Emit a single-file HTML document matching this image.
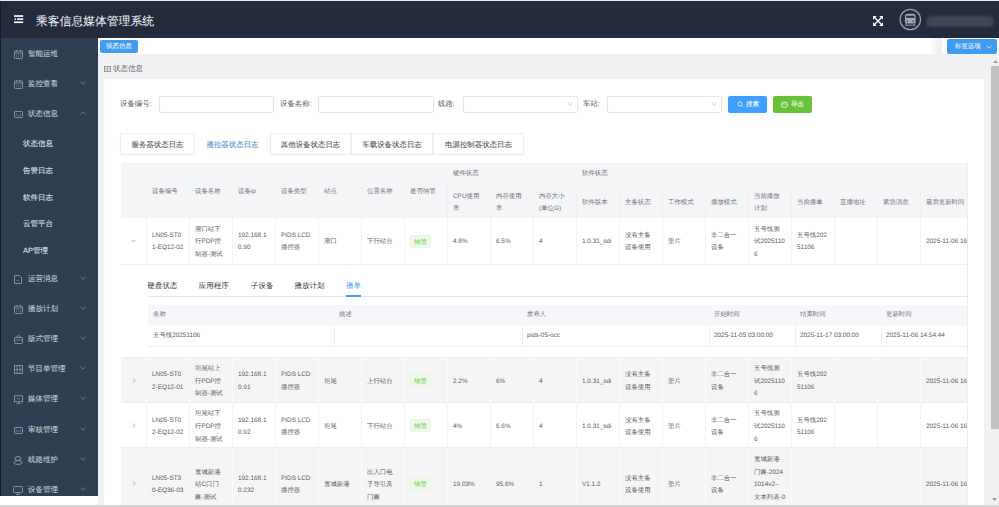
<!DOCTYPE html>
<html><head><meta charset="utf-8">
<style>
*{box-sizing:border-box;margin:0;padding:0}
html,body{width:999px;height:507px;overflow:hidden;background:#fff;font-family:"Liberation Sans",sans-serif;text-rendering:geometricPrecision}
.mi .tx{-webkit-text-stroke:0.08px}
.tag1,.tagopt,.btn span{-webkit-text-stroke:0.05px}
.si .tx2{-webkit-text-stroke:0.05px}
#hdr .title{-webkit-text-stroke:0.05px}
.tab{-webkit-text-stroke:0.05px}
.abs{position:absolute}
#hdr{left:0;top:0;width:999px;height:38px;background:#232b3d;border-top:1px solid #e8eaee}
#hdr .ham{left:14px;top:15px;width:9px;height:8px}
#hdr .title{left:36px;top:12.5px;font-size:11.8px;color:#f0f2f5;line-height:14px;white-space:nowrap}
#side{left:0;top:38px;width:98px;height:458px;background:#2f3f53;border-left:1px solid #1a222d}
.mi{position:absolute;left:0;width:97px;height:0;font-size:7.5px;color:#c3ccd7;white-space:nowrap}
.mi .tx{position:absolute;left:28px;top:-5px;line-height:10px}
.si{position:absolute;left:23px;height:0;font-size:7.5px;color:#e8edf3;white-space:nowrap}
.si .tx2{position:absolute;left:0;top:-5px;line-height:10px}
#main{left:98px;top:38px;width:901px;height:469px;background:#f0f1f3}
#tabbar{left:98px;top:38px;width:901px;height:16px;background:#fff}
.tag1{left:100px;top:40px;width:38px;height:13px;background:#3f9cf2;border-radius:2px;color:#fff;font-size:6.4px;line-height:13px;text-align:center}
.tagopt{left:946.5px;top:39px;width:50.5px;height:15px;background:#3f9cf2;border-radius:2px;color:#e8f2ff;font-size:6.4px;line-height:15px;padding-left:8.5px}
#sb{left:990px;top:54px;width:9px;height:451px;background:#f1f1f1}
#sb .th{left:1px;top:12px;width:8px;height:363px;background:#c1c1c1}
#card{left:103.5px;top:79px;width:880.5px;height:426px;background:#fff}
.crumb{left:104px;top:64px;font-size:7.5px;color:#606266;line-height:10px}
.lbl{font-size:7.4px;color:#5a5e66;line-height:10px;white-space:nowrap}
.inp{height:17px;border:1px solid #e5e6e9;border-radius:2px;background:#fff}
.btn{height:17px;border-radius:2px;color:#fff;font-size:6.5px;line-height:17px;text-align:center}
.tab{top:133px;height:22px;border:1px solid #eceef2;box-shadow:0 1px 2px rgba(0,0,0,0.03);font-size:7.45px;line-height:20px;padding-top:1px;text-align:center;color:#4a4d52;background:#fff;white-space:nowrap}
.tab.act{border-color:transparent;box-shadow:none;color:#4f88cf}

#tbl{position:absolute;left:121px;top:163px;width:847px;height:342px;overflow:hidden}
#tbl .tb{position:absolute}
#tbl .ct{position:absolute;font-size:6.4px;line-height:12.6px;color:#5a5d63;white-space:nowrap}
#tbl .ht{position:absolute;font-size:6.4px;line-height:12.6px;color:#6e7178;white-space:nowrap}
#tbl .tag{position:absolute;width:21px;height:13px;background:#eef8e8;border:1px solid #e8f5e0;border-radius:2px;color:#67c23a;font-size:6.4px;line-height:13px;text-align:center}
#tbl .it{position:absolute;font-size:7.5px;line-height:10px;color:#303133;white-space:nowrap}
#tbl .it.act{color:#409eff}
</style></head><body>
<div id="hdr" class="abs">
  <svg class="abs" style="left:14px;top:14px" width="9.5" height="9" viewBox="0 0 9.5 9"><rect x="0" y="0.2" width="9.2" height="1.7" fill="#fff"/><rect x="3" y="3.3" width="6.2" height="1.6" fill="#fff"/><path d="M0 4.1L2 2.9V5.3z" fill="#fff"/><rect x="0" y="6.4" width="9.2" height="1.7" fill="#fff"/></svg>
  <div class="abs title">乘客信息媒体管理系统</div>
  <svg class="abs" style="left:873px;top:15px" width="10" height="10" viewBox="0 0 10 10"><path d="M1.5 1.5L8.5 8.5M8.5 1.5L1.5 8.5" stroke="#fff" stroke-width="1.4"/><g fill="#fff"><path d="M0 0h3.8L0 3.8z"/><path d="M10 0h-3.8L10 3.8z"/><path d="M0 10h3.8L0 6.2z"/><path d="M10 10h-3.8L10 6.2z"/></g></svg>
  <svg class="abs" style="left:899px;top:7px" width="23" height="23" viewBox="0 0 23 23"><circle cx="11.3" cy="11.5" r="10.2" fill="none" stroke="#9a9fa8" stroke-width="1.2"/><path d="M6 8.2Q6 5.7 8.5 5.7H14.1Q16.6 5.7 16.6 8.2V14.6Q16.6 15.6 15.6 15.6H7Q6 15.6 6 14.6z" fill="#a3a7ae"/><rect x="7.1" y="7.7" width="8.4" height="2.2" fill="#2a3244"/><circle cx="8.3" cy="13.2" r="0.7" fill="#2a3244"/><circle cx="14.3" cy="13.2" r="0.7" fill="#2a3244"/><path d="M7.6 15.6L6.4 18.2M15 15.6L16.2 18.2M7.2 17.2H15.4" stroke="#a3a7ae" stroke-width="0.9" fill="none"/></svg>
  <div class="abs" style="left:926px;top:15px;width:68px;height:11px;border-radius:6px;background:#3d4757;filter:blur(0.8px)"></div>

</div>
<div id="side" class="abs"></div>
<div class="mi" style="top:54.0px"><svg class="abs" style="left:14px;top:-4px" width="9" height="9" viewBox="0 0 9 9"><rect x="0.5" y="1" width="8" height="7.5" rx="0.8" fill="none" stroke="#8b97a8" stroke-width="0.9"/><line x1="0.5" y1="3" x2="8.5" y2="3" stroke="#8b97a8" stroke-width="0.8"/><line x1="2.5" y1="0" x2="2.5" y2="1.8" stroke="#8b97a8" stroke-width="0.8"/><line x1="6.5" y1="0" x2="6.5" y2="1.8" stroke="#8b97a8" stroke-width="0.8"/><path d="M2 5h1M4 5h1M6 5h1M2 6.7h1M4 6.7h1M6 6.7h1" stroke="#8b97a8" stroke-width="0.6"/></svg><span class="tx">智能运维</span></div>
<div class="mi" style="top:84.0px"><svg class="abs" style="left:14px;top:-4px" width="9" height="9" viewBox="0 0 9 9"><rect x="0.5" y="1" width="8" height="7.5" rx="0.8" fill="none" stroke="#8b97a8" stroke-width="0.9"/><line x1="0.5" y1="3" x2="8.5" y2="3" stroke="#8b97a8" stroke-width="0.8"/><line x1="2.5" y1="0" x2="2.5" y2="1.8" stroke="#8b97a8" stroke-width="0.8"/><line x1="6.5" y1="0" x2="6.5" y2="1.8" stroke="#8b97a8" stroke-width="0.8"/><path d="M2 5h1M4 5h1M6 5h1M2 6.7h1M4 6.7h1M6 6.7h1" stroke="#8b97a8" stroke-width="0.6"/></svg><span class="tx">监控查看</span><svg class="abs" style="left:80px;top:-3px" width="6" height="4" viewBox="0 0 6 4"><path d="M0.5 0.8L3 3.2L5.5 0.8" fill="none" stroke="#7d8a9c" stroke-width="0.8"/></svg></div>
<div class="mi" style="top:114.0px"><svg class="abs" style="left:14px;top:-3px" width="9" height="7" viewBox="0 0 9 7"><rect x="0.5" y="0.5" width="8" height="6" rx="0.6" fill="none" stroke="#8b97a8" stroke-width="0.9"/><path d="M2.3 2.5v2M6.5 2.5v2M3.5 4.5h2" stroke="#8b97a8" stroke-width="0.6"/></svg><span class="tx">状态信息</span><svg class="abs" style="left:80px;top:-3px" width="6" height="4" viewBox="0 0 6 4"><path d="M0.5 3.2L3 0.8L5.5 3.2" fill="none" stroke="#7d8a9c" stroke-width="0.8"/></svg></div>
<div class="si" style="top:143.5px"><span class="tx2">状态信息</span></div>
<div class="si" style="top:170.5px"><span class="tx2">告警日志</span></div>
<div class="si" style="top:197.5px"><span class="tx2">软件日志</span></div>
<div class="si" style="top:224.0px"><span class="tx2">云管平台</span></div>
<div class="si" style="top:251.0px"><span class="tx2">AP管理</span></div>
<div class="mi" style="top:279.3px"><svg class="abs" style="left:14px;top:-4px" width="8" height="9" viewBox="0 0 8 9"><path d="M0.5 0.5h5l2 2v6h-7z" fill="none" stroke="#8b97a8" stroke-width="0.9"/><path d="M2.5 5.5h2" stroke="#8b97a8" stroke-width="0.7"/></svg><span class="tx">运营消息</span><svg class="abs" style="left:80px;top:-3px" width="6" height="4" viewBox="0 0 6 4"><path d="M0.5 0.8L3 3.2L5.5 0.8" fill="none" stroke="#7d8a9c" stroke-width="0.8"/></svg></div>
<div class="mi" style="top:309.3px"><svg class="abs" style="left:14px;top:-4px" width="9" height="9" viewBox="0 0 9 9"><rect x="0.5" y="1" width="8" height="7.5" rx="0.8" fill="none" stroke="#8b97a8" stroke-width="0.9"/><line x1="0.5" y1="3" x2="8.5" y2="3" stroke="#8b97a8" stroke-width="0.8"/><line x1="2.5" y1="0" x2="2.5" y2="1.8" stroke="#8b97a8" stroke-width="0.8"/><line x1="6.5" y1="0" x2="6.5" y2="1.8" stroke="#8b97a8" stroke-width="0.8"/><path d="M2 5h1M4 5h1M6 5h1M2 6.7h1M4 6.7h1M6 6.7h1" stroke="#8b97a8" stroke-width="0.6"/></svg><span class="tx">播放计划</span><svg class="abs" style="left:80px;top:-3px" width="6" height="4" viewBox="0 0 6 4"><path d="M0.5 0.8L3 3.2L5.5 0.8" fill="none" stroke="#7d8a9c" stroke-width="0.8"/></svg></div>
<div class="mi" style="top:339.3px"><svg class="abs" style="left:14px;top:-4px" width="9" height="9" viewBox="0 0 9 9"><rect x="0.5" y="2.5" width="8" height="6" rx="0.6" fill="none" stroke="#8b97a8" stroke-width="0.9"/><path d="M3 2.5v-1.6h3v1.6M0.5 5h8" fill="none" stroke="#8b97a8" stroke-width="0.7"/></svg><span class="tx">版式管理</span><svg class="abs" style="left:80px;top:-3px" width="6" height="4" viewBox="0 0 6 4"><path d="M0.5 0.8L3 3.2L5.5 0.8" fill="none" stroke="#7d8a9c" stroke-width="0.8"/></svg></div>
<div class="mi" style="top:369.3px"><svg class="abs" style="left:14px;top:-4px" width="9" height="9" viewBox="0 0 9 9"><rect x="0.5" y="0.5" width="8" height="8" fill="none" stroke="#8b97a8" stroke-width="0.9"/><path d="M3 0.5v8M6 0.5v8M0.5 4.5h8" stroke="#8b97a8" stroke-width="0.7"/></svg><span class="tx">节目单管理</span><svg class="abs" style="left:80px;top:-3px" width="6" height="4" viewBox="0 0 6 4"><path d="M0.5 0.8L3 3.2L5.5 0.8" fill="none" stroke="#7d8a9c" stroke-width="0.8"/></svg></div>
<div class="mi" style="top:399.3px"><svg class="abs" style="left:14px;top:-4px" width="9" height="9" viewBox="0 0 9 9"><rect x="0.5" y="0.8" width="8" height="6" fill="none" stroke="#8b97a8" stroke-width="0.9"/><path d="M4.5 6.8v2M2.5 8.5h4M3 3l1.5 1.5L6 3" fill="none" stroke="#8b97a8" stroke-width="0.7"/></svg><span class="tx">媒体管理</span><svg class="abs" style="left:80px;top:-3px" width="6" height="4" viewBox="0 0 6 4"><path d="M0.5 0.8L3 3.2L5.5 0.8" fill="none" stroke="#7d8a9c" stroke-width="0.8"/></svg></div>
<div class="mi" style="top:429.8px"><svg class="abs" style="left:14px;top:-3px" width="9" height="7" viewBox="0 0 9 7"><rect x="0.5" y="0.5" width="8" height="6" rx="0.6" fill="none" stroke="#8b97a8" stroke-width="0.9"/><path d="M2.3 2.5v2M6.5 2.5v2M3.5 4.5h2" stroke="#8b97a8" stroke-width="0.6"/></svg><span class="tx">审核管理</span><svg class="abs" style="left:80px;top:-3px" width="6" height="4" viewBox="0 0 6 4"><path d="M0.5 0.8L3 3.2L5.5 0.8" fill="none" stroke="#7d8a9c" stroke-width="0.8"/></svg></div>
<div class="mi" style="top:459.8px"><svg class="abs" style="left:13px;top:-4px" width="10" height="9" viewBox="0 0 10 9"><ellipse cx="5" cy="2.5" rx="3" ry="2" fill="none" stroke="#8b97a8" stroke-width="0.9"/><ellipse cx="5" cy="6.5" rx="4" ry="2" fill="none" stroke="#8b97a8" stroke-width="0.9"/></svg><span class="tx">线路维护</span><svg class="abs" style="left:80px;top:-3px" width="6" height="4" viewBox="0 0 6 4"><path d="M0.5 0.8L3 3.2L5.5 0.8" fill="none" stroke="#7d8a9c" stroke-width="0.8"/></svg></div>
<div class="mi" style="top:489.8px"><svg class="abs" style="left:13px;top:-4px" width="10" height="9" viewBox="0 0 10 9"><rect x="0.5" y="0.5" width="9" height="6" rx="0.8" fill="none" stroke="#8b97a8" stroke-width="0.9"/><path d="M3 8.5h4M5 6.5v2" stroke="#8b97a8" stroke-width="0.8"/></svg><span class="tx">设备管理</span><svg class="abs" style="left:80px;top:-3px" width="6" height="4" viewBox="0 0 6 4"><path d="M0.5 0.8L3 3.2L5.5 0.8" fill="none" stroke="#7d8a9c" stroke-width="0.8"/></svg></div>
<div id="main" class="abs"></div>
<div class="abs" style="left:0;top:1px;width:1px;height:495px;background:#1c1d20"></div>
<div id="tabbar" class="abs"></div>
<div class="abs tag1">状态信息</div>
<div class="abs" style="left:929px;top:38px;width:14px;height:16px;background:linear-gradient(to right,rgba(0,0,0,0),rgba(0,0,0,0.07) 85%,rgba(0,0,0,0))"></div>
<div class="abs tagopt">标签选项<svg class="abs" style="left:39px;top:5.5px" width="6" height="4" viewBox="0 0 6 4"><path d="M0.5 0.8L3 3.2L5.5 0.8" fill="none" stroke="#e8f2ff" stroke-width="0.8"/></svg></div>
<div id="sb" class="abs"><div class="abs th"></div>
<svg class="abs" style="left:3px;top:6px" width="5" height="3" viewBox="0 0 5 3"><path d="M0 3L2.5 0L5 3z" fill="#a0a0a0"/></svg>
<svg class="abs" style="left:2px;top:444px" width="5" height="3" viewBox="0 0 5 3"><path d="M0 0L2.5 3L5 0z" fill="#a0a0a0"/></svg></div>
<svg class="abs" style="left:104px;top:66px" width="7" height="6" viewBox="0 0 7 6"><rect x="0.4" y="0.4" width="6.2" height="5.2" fill="none" stroke="#8a8a8a" stroke-width="0.8"/><path d="M3.5 0.4v5.2M0.4 3h6.2" stroke="#8a8a8a" stroke-width="0.7"/></svg>
<div class="abs crumb" style="left:113px;top:64px">状态信息</div>
<div id="card" class="abs"></div>
<div class="abs" style="left:0;top:505px;width:999px;height:2px;background:#d6d6d6"></div>
<div class="abs lbl" style="left:120px;top:99px">设备编号:</div>
<div class="abs inp" style="left:159px;top:96px;width:115px"></div>
<div class="abs lbl" style="left:280px;top:99px">设备名称:</div>
<div class="abs inp" style="left:318px;top:96px;width:116px"></div>
<div class="abs lbl" style="left:438px;top:99px">线路:</div>
<div class="abs inp" style="left:463px;top:96px;width:115px"><svg class="abs" style="left:102.5px;top:5.3px" width="6" height="4" viewBox="0 0 6 4"><path d="M0.5 0.8L3 3.2L5.5 0.8" fill="none" stroke="#c0c4cc" stroke-width="0.8"/></svg></div>
<div class="abs lbl" style="left:583px;top:99px">车站:</div>
<div class="abs inp" style="left:607px;top:96px;width:115px"><svg class="abs" style="left:102.5px;top:5.3px" width="6" height="4" viewBox="0 0 6 4"><path d="M0.5 0.8L3 3.2L5.5 0.8" fill="none" stroke="#c0c4cc" stroke-width="0.8"/></svg></div>
<div class="abs btn" style="left:728px;top:96px;width:39px;background:#409eff"><svg class="abs" style="left:8.5px;top:5.2px" width="7" height="7" viewBox="0 0 7 7"><circle cx="3" cy="3" r="2.1" fill="none" stroke="#fff" stroke-width="0.75"/><path d="M4.5 4.5L5.8 5.8" stroke="#fff" stroke-width="0.75"/></svg><span style="position:absolute;left:18px;top:0">搜索</span></div>
<div class="abs btn" style="left:773px;top:96px;width:39px;background:#67c23a"><svg class="abs" style="left:8px;top:5px" width="7" height="7" viewBox="0 0 7 7"><rect x="0.6" y="1.3" width="5.8" height="4.8" rx="1.3" fill="none" stroke="#fff" stroke-width="0.75"/><path d="M0.6 3h5.8" stroke="#fff" stroke-width="0.6"/></svg><span style="position:absolute;left:18px;top:0">导出</span></div>
<div id="tbl">
<div class="tb" style="left:0;top:0;width:847px;height:55px;background:#f3f5f7"></div>
<div class="tb" style="left:326px;top:22px;width:1px;height:33px;background:#eef1f4"></div>
<div class="tb" style="left:369px;top:22px;width:1px;height:33px;background:#eef1f4"></div>
<div class="tb" style="left:412px;top:22px;width:1px;height:33px;background:#eef1f4"></div>
<div class="tb" style="left:455px;top:22px;width:1px;height:33px;background:#eef1f4"></div>
<div class="tb" style="left:498px;top:22px;width:1px;height:33px;background:#eef1f4"></div>
<div class="tb" style="left:541px;top:22px;width:1px;height:33px;background:#eef1f4"></div>
<div class="tb" style="left:584px;top:22px;width:1px;height:33px;background:#eef1f4"></div>
<div class="tb" style="left:627px;top:22px;width:1px;height:33px;background:#eef1f4"></div>
<div class="tb" style="left:670px;top:22px;width:1px;height:33px;background:#eef1f4"></div>
<div class="tb" style="left:713px;top:22px;width:1px;height:33px;background:#eef1f4"></div>
<div class="tb" style="left:756px;top:22px;width:1px;height:33px;background:#eef1f4"></div>
<div class="tb" style="left:799px;top:22px;width:1px;height:33px;background:#eef1f4"></div>
<div class="tb" style="left:325px;top:22px;width:522px;height:1px;background:#f0f2f4"></div>
<div class="ht" style="left:31px;top:22.70px">设备编号</div>
<div class="ht" style="left:74px;top:22.70px">设备名称</div>
<div class="ht" style="left:117px;top:22.70px">设备ip</div>
<div class="ht" style="left:160px;top:22.70px">设备类型</div>
<div class="ht" style="left:203px;top:22.70px">站点</div>
<div class="ht" style="left:246px;top:22.70px">位置名称</div>
<div class="ht" style="left:289px;top:22.70px">是否纳管</div>
<div class="ht" style="left:332px;top:5.20px">硬件状态</div>
<div class="ht" style="left:461px;top:5.20px">软件状态</div>
<div class="ht" style="left:332px;top:27.90px">CPU使用<br>率</div>
<div class="ht" style="left:375px;top:27.90px">内存使用<br>率</div>
<div class="ht" style="left:418px;top:27.90px">内存大小<br>(单位G)</div>
<div class="ht" style="left:461px;top:34.20px">软件版本</div>
<div class="ht" style="left:504px;top:34.20px">主备状态</div>
<div class="ht" style="left:547px;top:34.20px">工作模式</div>
<div class="ht" style="left:590px;top:34.20px">播放模式</div>
<div class="ht" style="left:633px;top:27.90px">当前播放<br>计划</div>
<div class="ht" style="left:676px;top:34.20px">当前播单</div>
<div class="ht" style="left:719px;top:34.20px">直播地址</div>
<div class="ht" style="left:762px;top:34.20px">紧急消息</div>
<div class="ht" style="left:805px;top:34.20px">最后更新时间</div>
<div class="tb" style="left:0;top:55px;width:847px;height:46.5px;background:#ffffff;border-bottom:1px solid #ebeef5"></div>
<div class="tb" style="left:25px;top:55px;width:1px;height:46.5px;background:#f1f3f5"></div>
<div class="tb" style="left:68px;top:55px;width:1px;height:46.5px;background:#f1f3f5"></div>
<div class="tb" style="left:111px;top:55px;width:1px;height:46.5px;background:#f1f3f5"></div>
<div class="tb" style="left:154px;top:55px;width:1px;height:46.5px;background:#f1f3f5"></div>
<div class="tb" style="left:197px;top:55px;width:1px;height:46.5px;background:#f1f3f5"></div>
<div class="tb" style="left:240px;top:55px;width:1px;height:46.5px;background:#f1f3f5"></div>
<div class="tb" style="left:283px;top:55px;width:1px;height:46.5px;background:#f1f3f5"></div>
<div class="tb" style="left:326px;top:55px;width:1px;height:46.5px;background:#f1f3f5"></div>
<div class="tb" style="left:369px;top:55px;width:1px;height:46.5px;background:#f1f3f5"></div>
<div class="tb" style="left:412px;top:55px;width:1px;height:46.5px;background:#f1f3f5"></div>
<div class="tb" style="left:455px;top:55px;width:1px;height:46.5px;background:#f1f3f5"></div>
<div class="tb" style="left:498px;top:55px;width:1px;height:46.5px;background:#f1f3f5"></div>
<div class="tb" style="left:541px;top:55px;width:1px;height:46.5px;background:#f1f3f5"></div>
<div class="tb" style="left:584px;top:55px;width:1px;height:46.5px;background:#f1f3f5"></div>
<div class="tb" style="left:627px;top:55px;width:1px;height:46.5px;background:#f1f3f5"></div>
<div class="tb" style="left:670px;top:55px;width:1px;height:46.5px;background:#f1f3f5"></div>
<div class="tb" style="left:713px;top:55px;width:1px;height:46.5px;background:#f1f3f5"></div>
<div class="tb" style="left:756px;top:55px;width:1px;height:46.5px;background:#f1f3f5"></div>
<div class="tb" style="left:799px;top:55px;width:1px;height:46.5px;background:#f1f3f5"></div>
<svg class="tb" style="left:10px;top:76.2px" width="5" height="4" viewBox="0 0 5 4"><path d="M0.5 1L2.5 3L4.5 1" fill="none" stroke="#909399" stroke-width="0.7"/></svg>
<div class="ct" style="left:31px;top:66.85px">LN05-ST0<br>1-EQ12-02</div>
<div class="ct" style="left:74px;top:60.55px">潮口站下<br>行PDP控<br>制器-测试</div>
<div class="ct" style="left:117px;top:66.85px">192.168.1<br>0.90</div>
<div class="ct" style="left:160px;top:66.85px">PIDS LCD<br>播控器</div>
<div class="ct" style="left:203px;top:73.15px">潮口</div>
<div class="ct" style="left:246px;top:73.15px">下行站台</div>
<div class="tag" style="left:289px;top:71.8px">纳管</div>
<div class="ct" style="left:332px;top:73.15px">4.8%</div>
<div class="ct" style="left:375px;top:73.15px">6.5%</div>
<div class="ct" style="left:418px;top:73.15px">4</div>
<div class="ct" style="left:461px;top:73.15px">1.0.31_sdi</div>
<div class="ct" style="left:504px;top:66.85px">没有主备<br>设备使用</div>
<div class="ct" style="left:547px;top:73.15px">垫片</div>
<div class="ct" style="left:590px;top:66.85px">非二合一<br>设备</div>
<div class="ct" style="left:633px;top:60.55px">五号线测<br>试2025110<br>6</div>
<div class="ct" style="left:676px;top:66.85px">五号线202<br>51106</div>
<div class="ct" style="left:805px;top:73.15px">2025-11-06 16:28:51</div>
<div class="tb" style="left:0;top:194.5px;width:847px;height:45px;background:#f5f5f6;border-bottom:1px solid #ebeef5"></div>
<div class="tb" style="left:25px;top:194.5px;width:1px;height:45px;background:#fbfbfc"></div>
<div class="tb" style="left:68px;top:194.5px;width:1px;height:45px;background:#fbfbfc"></div>
<div class="tb" style="left:111px;top:194.5px;width:1px;height:45px;background:#fbfbfc"></div>
<div class="tb" style="left:154px;top:194.5px;width:1px;height:45px;background:#fbfbfc"></div>
<div class="tb" style="left:197px;top:194.5px;width:1px;height:45px;background:#fbfbfc"></div>
<div class="tb" style="left:240px;top:194.5px;width:1px;height:45px;background:#fbfbfc"></div>
<div class="tb" style="left:283px;top:194.5px;width:1px;height:45px;background:#fbfbfc"></div>
<div class="tb" style="left:326px;top:194.5px;width:1px;height:45px;background:#fbfbfc"></div>
<div class="tb" style="left:369px;top:194.5px;width:1px;height:45px;background:#fbfbfc"></div>
<div class="tb" style="left:412px;top:194.5px;width:1px;height:45px;background:#fbfbfc"></div>
<div class="tb" style="left:455px;top:194.5px;width:1px;height:45px;background:#fbfbfc"></div>
<div class="tb" style="left:498px;top:194.5px;width:1px;height:45px;background:#fbfbfc"></div>
<div class="tb" style="left:541px;top:194.5px;width:1px;height:45px;background:#fbfbfc"></div>
<div class="tb" style="left:584px;top:194.5px;width:1px;height:45px;background:#fbfbfc"></div>
<div class="tb" style="left:627px;top:194.5px;width:1px;height:45px;background:#fbfbfc"></div>
<div class="tb" style="left:670px;top:194.5px;width:1px;height:45px;background:#fbfbfc"></div>
<div class="tb" style="left:713px;top:194.5px;width:1px;height:45px;background:#fbfbfc"></div>
<div class="tb" style="left:756px;top:194.5px;width:1px;height:45px;background:#fbfbfc"></div>
<div class="tb" style="left:799px;top:194.5px;width:1px;height:45px;background:#fbfbfc"></div>
<svg class="tb" style="left:11px;top:214.5px" width="4" height="5" viewBox="0 0 4 5"><path d="M1 0.5L3 2.5L1 4.5" fill="none" stroke="#909399" stroke-width="0.7"/></svg>
<div class="ct" style="left:31px;top:206.40px">LN05-ST0<br>2-EQ12-01</div>
<div class="ct" style="left:74px;top:200.10px">坦尾站上<br>行PDP控<br>制器-测试</div>
<div class="ct" style="left:117px;top:206.40px">192.168.1<br>0.91</div>
<div class="ct" style="left:160px;top:206.40px">PIDS LCD<br>播控器</div>
<div class="ct" style="left:203px;top:212.70px">坦尾</div>
<div class="ct" style="left:246px;top:212.70px">上行站台</div>
<div class="tag" style="left:289px;top:210.5px">纳管</div>
<div class="ct" style="left:332px;top:212.70px">2.2%</div>
<div class="ct" style="left:375px;top:212.70px">6%</div>
<div class="ct" style="left:418px;top:212.70px">4</div>
<div class="ct" style="left:461px;top:212.70px">1.0.31_sdi</div>
<div class="ct" style="left:504px;top:206.40px">没有主备<br>设备使用</div>
<div class="ct" style="left:547px;top:212.70px">垫片</div>
<div class="ct" style="left:590px;top:206.40px">非二合一<br>设备</div>
<div class="ct" style="left:633px;top:200.10px">五号线测<br>试2025110<br>6</div>
<div class="ct" style="left:676px;top:206.40px">五号线202<br>51106</div>
<div class="ct" style="left:805px;top:212.70px">2025-11-06 16:28:51</div>
<div class="tb" style="left:0;top:239.5px;width:847px;height:45.5px;background:#ffffff;border-bottom:1px solid #ebeef5"></div>
<div class="tb" style="left:25px;top:239.5px;width:1px;height:45.5px;background:#f1f3f5"></div>
<div class="tb" style="left:68px;top:239.5px;width:1px;height:45.5px;background:#f1f3f5"></div>
<div class="tb" style="left:111px;top:239.5px;width:1px;height:45.5px;background:#f1f3f5"></div>
<div class="tb" style="left:154px;top:239.5px;width:1px;height:45.5px;background:#f1f3f5"></div>
<div class="tb" style="left:197px;top:239.5px;width:1px;height:45.5px;background:#f1f3f5"></div>
<div class="tb" style="left:240px;top:239.5px;width:1px;height:45.5px;background:#f1f3f5"></div>
<div class="tb" style="left:283px;top:239.5px;width:1px;height:45.5px;background:#f1f3f5"></div>
<div class="tb" style="left:326px;top:239.5px;width:1px;height:45.5px;background:#f1f3f5"></div>
<div class="tb" style="left:369px;top:239.5px;width:1px;height:45.5px;background:#f1f3f5"></div>
<div class="tb" style="left:412px;top:239.5px;width:1px;height:45.5px;background:#f1f3f5"></div>
<div class="tb" style="left:455px;top:239.5px;width:1px;height:45.5px;background:#f1f3f5"></div>
<div class="tb" style="left:498px;top:239.5px;width:1px;height:45.5px;background:#f1f3f5"></div>
<div class="tb" style="left:541px;top:239.5px;width:1px;height:45.5px;background:#f1f3f5"></div>
<div class="tb" style="left:584px;top:239.5px;width:1px;height:45.5px;background:#f1f3f5"></div>
<div class="tb" style="left:627px;top:239.5px;width:1px;height:45.5px;background:#f1f3f5"></div>
<div class="tb" style="left:670px;top:239.5px;width:1px;height:45.5px;background:#f1f3f5"></div>
<div class="tb" style="left:713px;top:239.5px;width:1px;height:45.5px;background:#f1f3f5"></div>
<div class="tb" style="left:756px;top:239.5px;width:1px;height:45.5px;background:#f1f3f5"></div>
<div class="tb" style="left:799px;top:239.5px;width:1px;height:45.5px;background:#f1f3f5"></div>
<svg class="tb" style="left:11px;top:259.8px" width="4" height="5" viewBox="0 0 4 5"><path d="M1 0.5L3 2.5L1 4.5" fill="none" stroke="#909399" stroke-width="0.7"/></svg>
<div class="ct" style="left:31px;top:251.65px">LN05-ST0<br>2-EQ12-02</div>
<div class="ct" style="left:74px;top:245.35px">坦尾站下<br>行PDP控<br>制器-测试</div>
<div class="ct" style="left:117px;top:251.65px">192.168.1<br>0.92</div>
<div class="ct" style="left:160px;top:251.65px">PIDS LCD<br>播控器</div>
<div class="ct" style="left:203px;top:257.95px">坦尾</div>
<div class="ct" style="left:246px;top:257.95px">下行站台</div>
<div class="tag" style="left:289px;top:255.8px">纳管</div>
<div class="ct" style="left:332px;top:257.95px">4%</div>
<div class="ct" style="left:375px;top:257.95px">6.6%</div>
<div class="ct" style="left:418px;top:257.95px">4</div>
<div class="ct" style="left:461px;top:257.95px">1.0.31_sdi</div>
<div class="ct" style="left:504px;top:251.65px">没有主备<br>设备使用</div>
<div class="ct" style="left:547px;top:257.95px">垫片</div>
<div class="ct" style="left:590px;top:251.65px">非二合一<br>设备</div>
<div class="ct" style="left:633px;top:245.35px">五号线测<br>试2025110<br>6</div>
<div class="ct" style="left:676px;top:251.65px">五号线202<br>51106</div>
<div class="ct" style="left:805px;top:257.95px">2025-11-06 16:28:51</div>
<div class="tb" style="left:0;top:285px;width:847px;height:71px;background:#f5f5f6;border-bottom:1px solid #ebeef5"></div>
<div class="tb" style="left:25px;top:285px;width:1px;height:71px;background:#fbfbfc"></div>
<div class="tb" style="left:68px;top:285px;width:1px;height:71px;background:#fbfbfc"></div>
<div class="tb" style="left:111px;top:285px;width:1px;height:71px;background:#fbfbfc"></div>
<div class="tb" style="left:154px;top:285px;width:1px;height:71px;background:#fbfbfc"></div>
<div class="tb" style="left:197px;top:285px;width:1px;height:71px;background:#fbfbfc"></div>
<div class="tb" style="left:240px;top:285px;width:1px;height:71px;background:#fbfbfc"></div>
<div class="tb" style="left:283px;top:285px;width:1px;height:71px;background:#fbfbfc"></div>
<div class="tb" style="left:326px;top:285px;width:1px;height:71px;background:#fbfbfc"></div>
<div class="tb" style="left:369px;top:285px;width:1px;height:71px;background:#fbfbfc"></div>
<div class="tb" style="left:412px;top:285px;width:1px;height:71px;background:#fbfbfc"></div>
<div class="tb" style="left:455px;top:285px;width:1px;height:71px;background:#fbfbfc"></div>
<div class="tb" style="left:498px;top:285px;width:1px;height:71px;background:#fbfbfc"></div>
<div class="tb" style="left:541px;top:285px;width:1px;height:71px;background:#fbfbfc"></div>
<div class="tb" style="left:584px;top:285px;width:1px;height:71px;background:#fbfbfc"></div>
<div class="tb" style="left:627px;top:285px;width:1px;height:71px;background:#fbfbfc"></div>
<div class="tb" style="left:670px;top:285px;width:1px;height:71px;background:#fbfbfc"></div>
<div class="tb" style="left:713px;top:285px;width:1px;height:71px;background:#fbfbfc"></div>
<div class="tb" style="left:756px;top:285px;width:1px;height:71px;background:#fbfbfc"></div>
<div class="tb" style="left:799px;top:285px;width:1px;height:71px;background:#fbfbfc"></div>
<svg class="tb" style="left:11px;top:318.0px" width="4" height="5" viewBox="0 0 4 5"><path d="M1 0.5L3 2.5L1 4.5" fill="none" stroke="#909399" stroke-width="0.7"/></svg>
<div class="ct" style="left:31px;top:309.90px">LN05-ST3<br>0-EQ36-03</div>
<div class="ct" style="left:74px;top:303.60px">寰城新港<br>站C口门<br>匾-测试</div>
<div class="ct" style="left:117px;top:309.90px">192.168.1<br>0.232</div>
<div class="ct" style="left:160px;top:309.90px">PIDS LCD<br>播控器</div>
<div class="ct" style="left:203px;top:316.20px">寰城新港</div>
<div class="ct" style="left:246px;top:303.60px">出入口电<br>子导引及<br>门匾</div>
<div class="tag" style="left:289px;top:314.0px">纳管</div>
<div class="ct" style="left:332px;top:316.20px">19.03%</div>
<div class="ct" style="left:375px;top:316.20px">95.6%</div>
<div class="ct" style="left:418px;top:316.20px">1</div>
<div class="ct" style="left:461px;top:316.20px">V1.1.2</div>
<div class="ct" style="left:504px;top:309.90px">没有主备<br>设备使用</div>
<div class="ct" style="left:547px;top:316.20px">垫片</div>
<div class="ct" style="left:590px;top:309.90px">非二合一<br>设备</div>
<div class="ct" style="left:633px;top:291.00px">寰城新港<br>门匾-2024<br>1014v2--<br>文本列表-0<br>2</div>
<div class="ct" style="left:805px;top:316.20px">2025-11-06 16:28:51</div>
<div class="tb" style="left:0;top:101.5px;width:847px;height:93px;background:#fff;border-bottom:1px solid #ebeef5"></div>
<div class="it" style="left:26.5px;top:118px">硬盘状态</div>
<div class="it" style="left:77.75px;top:118px">应用程序</div>
<div class="it" style="left:130px;top:118px">子设备</div>
<div class="it" style="left:173.5px;top:118px">播放计划</div>
<div class="it act" style="left:225px;top:118px">播单</div>
<div class="tb" style="left:27px;top:133px;width:819px;height:1px;background:#e4e7ed"></div>
<div class="tb" style="left:225px;top:132px;width:15px;height:2px;background:#409eff"></div>
<div class="tb" style="left:27px;top:142px;width:819px;height:20.5px;background:#f5f7fa"></div>
<div class="tb" style="left:27px;top:162.5px;width:819px;height:21.5px;background:#fff;border-bottom:1px solid #ebeef5"></div>
<div class="tb" style="left:213px;top:162.5px;width:1px;height:21.5px;background:#ebeef5"></div>
<div class="tb" style="left:401px;top:162.5px;width:1px;height:21.5px;background:#ebeef5"></div>
<div class="tb" style="left:588px;top:162.5px;width:1px;height:21.5px;background:#ebeef5"></div>
<div class="tb" style="left:674px;top:162.5px;width:1px;height:21.5px;background:#ebeef5"></div>
<div class="tb" style="left:760px;top:162.5px;width:1px;height:21.5px;background:#ebeef5"></div>
<div class="ht" style="left:32px;top:145.70px">名称</div>
<div class="ht" style="left:218px;top:145.70px">描述</div>
<div class="ht" style="left:406px;top:145.70px">发布人</div>
<div class="ht" style="left:593px;top:145.70px">开始时间</div>
<div class="ht" style="left:679px;top:145.70px">结束时间</div>
<div class="ht" style="left:765px;top:145.70px">更新时间</div>
<div class="ct" style="left:32px;top:167.20px">五号线20251106</div>
<div class="ct" style="left:406px;top:167.20px">pids-05-occ</div>
<div class="ct" style="left:593px;top:167.20px">2025-11-05 03:00:00</div>
<div class="ct" style="left:679px;top:167.20px">2025-11-17 03:00:00</div>
<div class="ct" style="left:765px;top:167.20px">2025-11-06 14:54:44</div>
<div class="tb" style="left:846px;top:0;width:1px;height:342px;background:#eceef2"></div>
</div>
<div class="abs tab" style="left:120px;width:75px">服务器状态日志</div>
<div class="abs tab act" style="left:195px;width:75px">播控器状态日志</div>
<div class="abs tab" style="left:270px;width:81px">其他设备状态日志</div>
<div class="abs tab" style="left:351px;width:82px">车载设备状态日志</div>
<div class="abs tab" style="left:433px;width:91px">电源控制器状态日志</div>

</body></html>
